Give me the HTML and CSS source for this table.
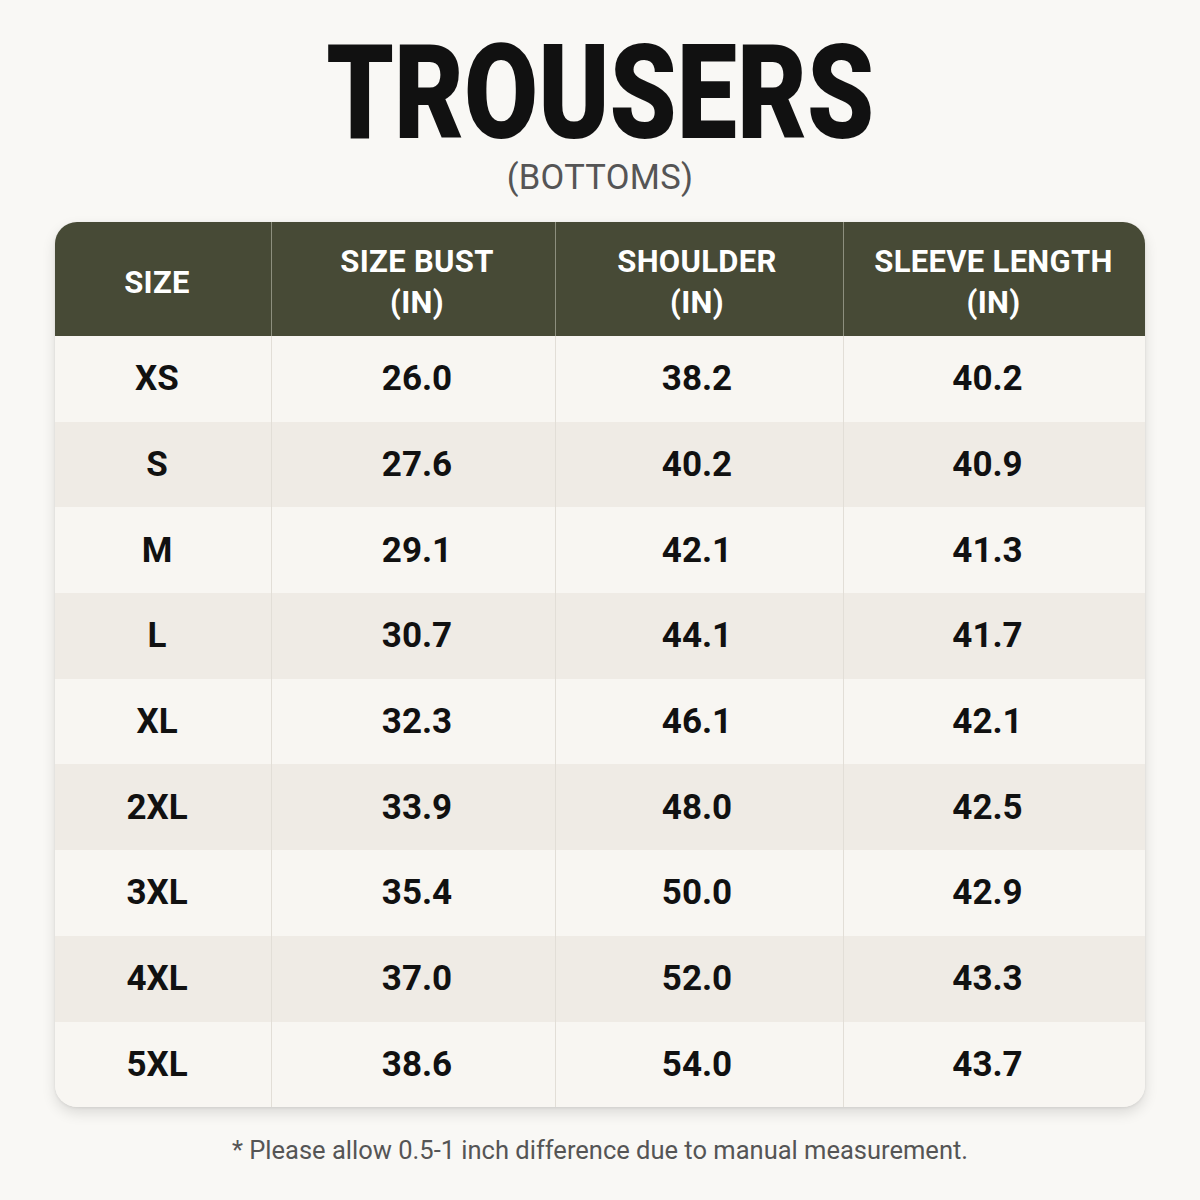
FILE: index.html
```html
<!DOCTYPE html>
<html lang="en">
<head>
<meta charset="utf-8">
<title>Trousers size chart</title>
<link rel="stylesheet" href="styles.css">
</head>
<body>
<main class="page">
  <header class="heading">
    <h1 class="title">TROUSERS</h1>
    <p class="subtitle">(BOTTOMS)</p>
  </header>
  <section class="chart">
    <div class="row head">
      <div class="cell">SIZE</div>
      <div class="cell">SIZE BUST<br>(IN)</div>
      <div class="cell">SHOULDER<br>(IN)</div>
      <div class="cell">SLEEVE LENGTH<br>(IN)</div>
    </div>
    <div class="row"><div class="cell">XS</div><div class="cell">26.0</div><div class="cell">38.2</div><div class="cell">40.2</div></div>
    <div class="row alt"><div class="cell">S</div><div class="cell">27.6</div><div class="cell">40.2</div><div class="cell">40.9</div></div>
    <div class="row"><div class="cell">M</div><div class="cell">29.1</div><div class="cell">42.1</div><div class="cell">41.3</div></div>
    <div class="row alt"><div class="cell">L</div><div class="cell">30.7</div><div class="cell">44.1</div><div class="cell">41.7</div></div>
    <div class="row"><div class="cell">XL</div><div class="cell">32.3</div><div class="cell">46.1</div><div class="cell">42.1</div></div>
    <div class="row alt"><div class="cell">2XL</div><div class="cell">33.9</div><div class="cell">48.0</div><div class="cell">42.5</div></div>
    <div class="row"><div class="cell">3XL</div><div class="cell">35.4</div><div class="cell">50.0</div><div class="cell">42.9</div></div>
    <div class="row alt"><div class="cell">4XL</div><div class="cell">37.0</div><div class="cell">52.0</div><div class="cell">43.3</div></div>
    <div class="row"><div class="cell">5XL</div><div class="cell">38.6</div><div class="cell">54.0</div><div class="cell">43.7</div></div>
  </section>
  <p class="note">* Please allow 0.5-1 inch difference due to manual measurement.</p>
</main>
</body>
</html>
```

FILE: styles.css
```css
html, body {
  margin: 0;
  padding: 0;
  background: #f9f8f5;
}
body {
  font-family: Roboto, "Liberation Sans", sans-serif;
  color: #111;
}
.page {
  width: 1200px;
  height: 1200px;
  display: flex;
  flex-direction: column;
  align-items: center;
}
.heading {
  display: flex;
  flex-direction: column;
  align-items: center;
  padding-top: 41px;
}
.title {
  margin: 0;
  font-size: 131px;
  font-weight: 900;
  line-height: 104px;
  height: 116px;
  letter-spacing: 0;
  transform: scaleX(0.82);
  color: #111;
}
.subtitle {
  margin: 0;
  font-size: 34.5px;
  line-height: 40px;
  font-weight: 400;
  color: #555;
  letter-spacing: 0.3px;
}
.chart {
  margin-top: 25px;
  width: 1090px;
  border-radius: 22px;
  overflow: hidden;
  box-shadow: 0 6px 14px rgba(0,0,0,0.12), 0 1px 3px rgba(0,0,0,0.08);
  background: #f8f6f2;
}
.row {
  display: grid;
  grid-template-columns: 216px 284px 288px 302px;
  height: 85.7px;
  background: #f8f6f2;
}
.row.alt {
  background: #efebe5;
}
.row.head {
  height: 114px;
  background: #474a36;
}
.cell {
  display: flex;
  align-items: center;
  justify-content: center;
  text-align: center;
  font-size: 35px;
  font-weight: 700;
  color: #111;
  border-left: 1px solid #e2ded7;
}
.cell:nth-child(1) {
  border-left: none;
  padding-right: 12px;
}
.cell:nth-child(2) {
  padding-left: 7px;
}
.cell:nth-child(3) {
  padding-right: 5px;
}
.cell:nth-child(4) {
  padding-right: 14px;
}
.head .cell {
  color: #fff;
  font-size: 31px;
  line-height: 41px;
  font-weight: 700;
  border-left: 1px solid #8d8f7e;
  letter-spacing: 0.3px;
  padding-top: 6px;
}
.head .cell:nth-child(1) {
  border-left: none;
}
.head .cell:nth-child(4) {
  padding-right: 2px;
}
.note {
  margin: 28px 0 0;
  font-size: 25.5px;
  color: #555;
}
```
